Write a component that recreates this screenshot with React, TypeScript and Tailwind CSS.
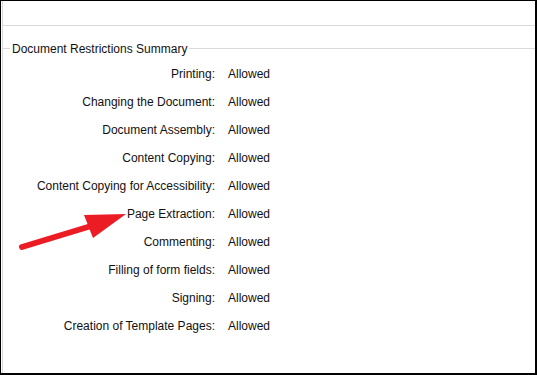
import React from "react";

const rows = [
  "Printing",
  "Changing the Document",
  "Document Assembly",
  "Content Copying",
  "Content Copying for Accessibility",
  "Page Extraction",
  "Commenting",
  "Filling of form fields",
  "Signing",
  "Creation of Template Pages",
];

export default function App() {
  return (
    <div
      className="relative w-[537px] h-[375px] bg-white border-l border-t border-r-2 border-b-2 border-black text-[12px] text-[#111]"
      style={{ fontFamily: '"Liberation Sans", Arial, sans-serif' }}
    >
      <div className="ml-[1px] h-full border-l border-[#d9d9d9] flex flex-col">
        {/* top strip */}
        <div className="h-[25px] border-b border-[#dadada]" />
        <div className="h-[21px]" />

        {/* group box header */}
        <div className="flex items-center h-[1px] mt-[1px]">
          <div className="w-[7px] h-px bg-[#dadada]" />
          <span className="px-[2px] leading-none whitespace-nowrap">
            Document Restrictions Summary
          </span>
          <div className="flex-1 h-px bg-[#dadada]" />
        </div>

        {/* restrictions */}
        <div className="mt-[11px] flex flex-col">
          {rows.map((label) => (
            <div key={label} className="flex items-center h-[28px]">
              <div className="w-[212px] text-right whitespace-nowrap">
                {label}:
              </div>
              <div className="ml-[13px]">Allowed</div>
            </div>
          ))}
        </div>
      </div>

      {/* red annotation arrow */}
      <svg
        className="absolute left-0 top-0 pointer-events-none"
        width="537"
        height="375"
      >
        <line
          x1="21"
          y1="246"
          x2="100"
          y2="222"
          stroke="#ec1c24"
          strokeWidth="6"
          strokeLinecap="round"
        />
        <polygon points="83,214 125,213 92,237" fill="#ec1c24" />
      </svg>
    </div>
  );
}
